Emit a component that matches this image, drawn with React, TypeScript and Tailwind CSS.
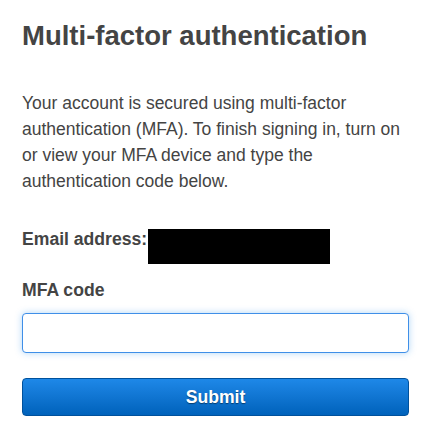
export default function App() {
  return (
    <div className="min-h-screen bg-white pl-[22px] pr-[17px] pt-[20px] text-[#444] [font-family:'Liberation_Sans',Arial,sans-serif]">
      <h1 className="text-[27.5px] font-bold leading-[32px]">Multi-factor authentication</h1>

      <p className="mt-[38px] pr-[5px] text-[17.5px] leading-[26px]">
        Your account is secured using multi-factor authentication (MFA). To finish signing in, turn on or view your
        MFA device and type the authentication code below.
      </p>

      <div className="mt-[35px] flex items-start">
        <span className="text-[17.6px] font-bold leading-[20px]">Email address:</span>
        <span className="ml-[1px] inline-block h-[35px] w-[182px] bg-black" />
      </div>

      <label className="mt-[16px] block text-[17.6px] font-bold leading-[20px]">MFA code</label>
      <input
        type="text"
        className="mt-[13px] block h-[40px] w-full rounded-[4px] border border-[#3f8fe8] bg-white px-2 shadow-[0_0_7px_rgba(30,136,229,0.35)] outline-none"
      />

      <button className="mt-[25px] block h-[38px] w-full rounded-[4px] border border-[#00519c] bg-gradient-to-b from-[#1e88e8] to-[#0062bb] text-[17.6px] font-bold text-white [text-shadow:0_1px_1px_rgba(0,0,0,0.45)]">
        Submit
      </button>
    </div>
  );
}
